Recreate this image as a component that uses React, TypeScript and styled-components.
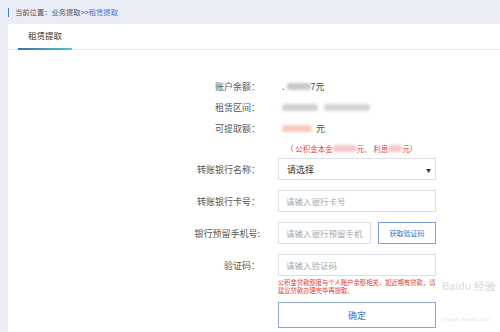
import React from 'react';
import styled, { createGlobalStyle } from 'styled-components';

const GlobalStyle = createGlobalStyle`
  html, body {
    margin: 0;
    padding: 0;
    background: #eaecf6;
    font-family: "Noto Sans CJK SC", "Noto Sans", sans-serif;
  }
  * { box-sizing: border-box; }
`

const Page = styled.div`
  display: flex;
  flex-direction: column;
  min-height: 332px;
  padding-left: 8px;
`
const Breadcrumb = styled.div`
  height: 24px;
  display: flex;
  align-items: center;
  font-size: 7.3px;
  color: #555;
  padding-left: 7px;
  position: relative;
  &::before {
    content: '';
    position: absolute;
    left: 0;
    top: 8px;
    width: 1px;
    height: 9px;
    background: #4a78d0;
  }
`
const Crumb = styled.span`
  color: #4a78d0;
`
const Panel = styled.div`
  flex: 1;
  background: #fff;
  position: relative;
`
const TabBar = styled.div`
  height: 26px;
  border-bottom: 1px solid #e7e7ea;
  padding-left: 10px;
  display: flex;
`
const Tab = styled.div`
  position: relative;
  width: 54px;
  text-align: center;
  font-size: 8.5px;
  color: #333;
  line-height: 23px;
  &::after {
    content: '';
    position: absolute;
    left: 0;
    right: 0;
    bottom: -1px;
    height: 2px;
    background: linear-gradient(90deg, #3b6db4, #52c8c6);
  }
`
const Form = styled.div`
  display: flex;
  flex-direction: column;
  padding-top: 26px;
`
const Row = styled.div<{ $h: number; $mb: number }>`
  display: grid;
  grid-template-columns: 252px 158px;
  column-gap: 18px;
  align-items: center;
  height: ${p => p.$h}px;
  margin-bottom: ${p => p.$mb}px;
`
const Label = styled.div`
  text-align: right;
  font-size: 9px;
  color: #555;
  white-space: nowrap;
`
const Value = styled.div`
  padding-left: 4px;
  font-size: 9px;
  color: #444;
  display: flex;
  align-items: center;
  white-space: nowrap;
`
const Redacted = styled.span<{ $w: number; $c: string }>`
  display: inline-block;
  width: ${p => p.$w}px;
  height: 7px;
  border-radius: 3px;
  background: ${p => p.$c};
  filter: blur(1.4px);
`
const Note = styled.div`
  padding-left: 8px;
  font-size: 7.5px;
  color: #e0443b;
  display: flex;
  align-items: center;
  white-space: nowrap;
`
const Select = styled.div`
  height: 22px;
  border: 1px solid #dcdfe6;
  display: flex;
  align-items: center;
  justify-content: space-between;
  padding: 0 4px 0 8px;
  font-size: 9px;
  color: #333;
`
const Caret = styled.span`
  font-size: 5px;
  color: #333;
`
const Input = styled.input<{ $w?: number }>`
  width: ${p => (p.$w ? `${p.$w}px` : '100%')};
  height: 22px;
  border: 1px solid #dcdfe6;
  padding: 0 7px;
  font-family: inherit;
  font-size: 8.5px;
  color: #333;
  outline: none;
  &::placeholder { color: #a9a9a9; }
`
const Inline = styled.div`
  display: flex;
  gap: 7px;
`
const CodeButton = styled.button`
  width: 58px;
  height: 22px;
  background: #fff;
  border: 1px solid #7f9fcf;
  color: #3c74c6;
  font-family: inherit;
  font-size: 7px;
  padding: 0;
`
const Hint = styled.div`
  grid-column: 2;
  width: 162px;
  font-size: 6.3px;
  line-height: 8px;
  color: #e2372f;
  white-space: nowrap;
`
const Confirm = styled.button`
  grid-column: 2;
  height: 26px;
  background: #fff;
  border: 1px solid #8ba7d1;
  color: #3c74c6;
  font-family: inherit;
  font-size: 9px;
  padding: 0;
`
const Watermark = styled.div`
  position: absolute;
  left: 434px;
  top: 256px;
  color: rgba(120, 120, 120, 0.22);
  font-family: "Liberation Sans", sans-serif;
  pointer-events: none;
  white-space: nowrap;
`
const MarkBig = styled.div`
  font-size: 10.5px;
  font-weight: bold;
`
const MarkSmall = styled.div`
  font-size: 6px;
  margin-top: 22px;
`

const App = () => {
  return (
    <Page>
      <GlobalStyle />
      <Breadcrumb>
        当前位置：业务提取&gt;&gt;<Crumb>租赁提取</Crumb>
      </Breadcrumb>
      <Panel>
        <TabBar>
          <Tab>租赁提取</Tab>
        </TabBar>
        <Form>
          <Row $h={20} $mb={1}>
            <Label>账户余额：</Label>
            <Value>.&nbsp;<Redacted $w={24} $c="#c8c8c8" />7元</Value>
          </Row>
          <Row $h={20} $mb={1}>
            <Label>租赁区间：</Label>
            <Value>
              <Redacted $w={36} $c="#d0d0d0" />
              &nbsp;&nbsp;&nbsp;
              <Redacted $w={46} $c="#d4d4d4" />
            </Value>
          </Row>
          <Row $h={20} $mb={1}>
            <Label>可提取额：</Label>
            <Value><Redacted $w={30} $c="#f7c9b8" />&nbsp;&nbsp;元</Value>
          </Row>
          <Row $h={18} $mb={1}>
            <div />
            <Note>
              （&nbsp;公积金本金<Redacted $w={24} $c="#f4c6cc" />元、&nbsp;利息<Redacted $w={14} $c="#f4c6cc" />元）
            </Note>
          </Row>
          <Row $h={22} $mb={10}>
            <Label>转账银行名称：</Label>
            <Select>
              请选择
              <Caret>▼</Caret>
            </Select>
          </Row>
          <Row $h={22} $mb={10}>
            <Label>转账银行卡号：</Label>
            <Input placeholder="请输入银行卡号" />
          </Row>
          <Row $h={22} $mb={10}>
            <Label>银行预留手机号:</Label>
            <Inline>
              <Input $w={93} placeholder="请输入银行预留手机" />
              <CodeButton>获取验证码</CodeButton>
            </Inline>
          </Row>
          <Row $h={22} $mb={2}>
            <Label>验证码：</Label>
            <Input placeholder="请输入验证码" />
          </Row>
          <Row $h={17} $mb={7}>
            <Hint>
              公积金贷款额度与个人账户余额相关，如近期有贷款，请
              <br />
              建议贷款办理完毕再提取。
            </Hint>
          </Row>
          <Row $h={26} $mb={0}>
            <Confirm>确定</Confirm>
          </Row>
        </Form>
        <Watermark>
          <MarkBig>Baidu 经验</MarkBig>
          <MarkSmall>jingyan.baidu.com</MarkSmall>
        </Watermark>
      </Panel>
    </Page>
  );
};

export default App;
